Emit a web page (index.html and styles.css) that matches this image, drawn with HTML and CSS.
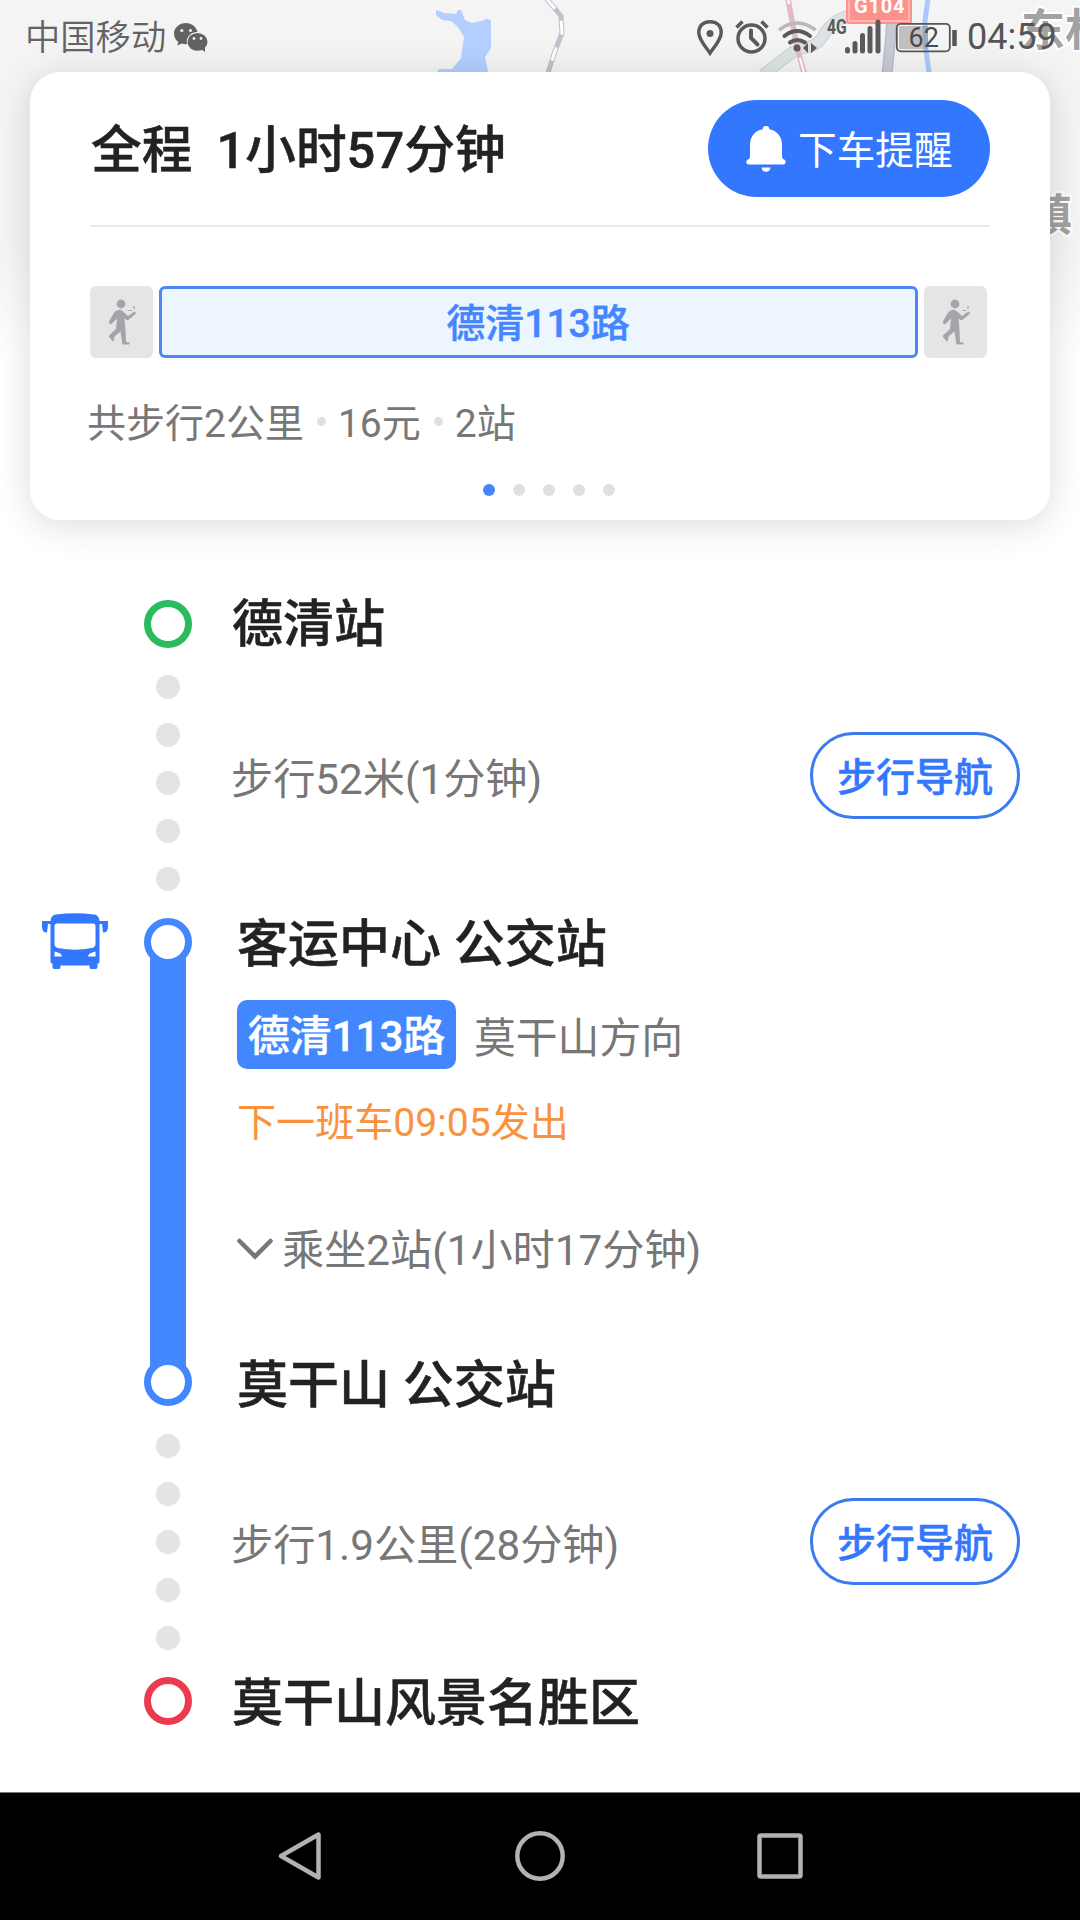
FILE: index.html
```html
<!DOCTYPE html>
<html lang="zh-CN">
<head>
<meta charset="utf-8">
<title>公交路线详情</title>
<link rel="stylesheet" href="styles.css">
</head>
<body>
<svg class="symbols" width="0" height="0" aria-hidden="true">
  <symbol id="walker" viewBox="0 0 28 46">
    <circle cx="13" cy="5" r="4.4"/>
    <path d="M9 11.5 Q12 10 14.500 12 L20 17 L26.500 12.500 Q28.500 13 27.500 15 L21 20.500 Q19.500 21.500 18 20.500 L16.500 19.500 L17.500 31 L18 43 L21 43.500 Q22.500 44.500 21 45.500 L15 45.500 Q14 45 14 43 L12.500 32.500 L6.500 37.500 L6 41.500 Q5 43 4 41.500 L1 38 Q.5 37 1.500 36 L8 30 L9 19.500 L4 24.500 Q2.500 26 1.200 24.500 Q.5 23.500 1.500 21.500 L5.500 14.500 Q7 12 9 11.500Z"/>
    <path d="M20.500 11.500 H24 M26 7 V10" fill="none" stroke="currentColor" stroke-width="1.200"/>
  </symbol>
</svg>
<div class="screen">
  <svg class="map" viewBox="0 0 1080 360" aria-hidden="true">
    <defs>
      <pattern id="hatch" width="4" height="4" patternUnits="userSpaceOnUse">
        <rect width="4" height="4" fill="#f6f6f6"/>
        <path d="M0 4 L4 0 M0 0 L4 4" stroke="#f2f2f2" stroke-width="1"/>
      </pattern>
      <linearGradient id="fade" x1="0" y1="0" x2="0" y2="1">
        <stop offset="0" stop-color="#fff" stop-opacity="0"/>
        <stop offset="1" stop-color="#fff"/>
      </linearGradient>
    </defs>
    <rect width="1080" height="360" fill="url(#hatch)"/>
    <path fill="#b3ceff" d="M436 10 L444 13 L456 14 L458 10 H461 L465 20 L472 23 L482 21 L486 19 L491 20 V48 L485 57 L488 72 H437 L439 69 H452 L461 58 L464 37 L458 27 L451 21 L442 20 L436 15Z"/>
    <g fill="none">
      <path d="M546 -2 L561 16 L562 33 L555 51 L548 73" stroke="#bcc2cc" stroke-width="5"/>
      <path d="M546 -2 L561 16 L562 33 L555 51 L548 73" stroke="#fff" stroke-width="3" stroke-dasharray="14 14"/>
      <path d="M763 75 L790 54 Q797 49 807 47 Q817 46 823 36 Q833 18 856 14" stroke="#c9d0d2" stroke-width="12"/>
      <path d="M763 75 L790 54 Q797 49 807 47 Q817 46 823 36 Q833 18 856 14" stroke="#dde3e5" stroke-width="10"/>
      <path d="M788 -1 L797 47 L804 73" stroke="#e3bcc3" stroke-width="5.500"/>
      <path d="M788 -1 L797 47 L804 73" stroke="#fff" stroke-width="2.500" stroke-dasharray="5 55 20"/>
      <path d="M892 14 Q891 38 887 74" stroke="#b9bdc8" stroke-width="11"/>
      <path d="M892 14 Q891 38 887 74" stroke="#c7cad3" stroke-width="8"/>
      <path d="M928 -1 L925 20 L926 50 L929 73" stroke="#aac8fd" stroke-width="5"/>
    </g>
    <rect x="846" y="-20" width="66" height="44" rx="3" fill="#fd918c"/>
    <rect x="849" y="-17" width="60" height="38" fill="none" stroke="#fec5c1" stroke-width="1.500"/>
    <text class="road-no" x="854" y="13">G104</text>
    <text class="place" x="1021" y="46">东林</text>
    <text class="place" x="1028" y="231">镇</text>
    <rect y="240" width="1080" height="120" fill="url(#fade)"/>
  </svg>

  <header class="status">
    <span class="carrier">中国移动</span>
    <svg class="wechat" viewBox="0 0 34 30" width="34" height="30">
      <path fill="#626262" d="M12 0C5.300 0 0 4.800 0 10.800c0 3.300 1.600 6.200 4.200 8.200L3.300 22.500 7.800 20.500q2 .7 4.200.7l1.200-.1A9.200 9.200 0 0 1 12.800 18.500C12.800 13 17.800 8.800 23.500 9 22.300 3.800 17.600 0 12 0Z"/>
      <ellipse cx="23.500" cy="18.900" rx="10" ry="8.900" fill="#626262"/>
      <path fill="#626262" d="M27 26 L31 29 L31 23Z"/>
      <g fill="#f1f1f1"><circle cx="7.800" cy="7.500" r="1.600"/><circle cx="16.500" cy="7.500" r="1.600"/><circle cx="20" cy="15.500" r="1.400"/><circle cx="27" cy="15.500" r="1.400"/></g>
    </svg>
    <svg class="status-icons" viewBox="0 0 264 40" width="264" height="40">
      <g fill="none" stroke="#5a5a5a" stroke-width="3.500">
        <path d="M13 35 C9 29 1.800 22 1.800 14.500 C1.800 7 7 3.800 13 3.800 S24.200 7 24.200 14.500 C24.200 22 17 29 13 35Z"/>
        <circle cx="54.500" cy="20.500" r="13.500"/>
        <path d="M54 12.500 V20 L60.500 26.500" stroke-width="4" stroke-linecap="round"/>
        <path d="M39.500 9.500 L45.500 3.500 M64.500 3.500 L70.500 9.500"/>
        <path d="M82 12 Q100 -2 118.500 12" stroke="#b9b9b9"/>
        <path d="M87.500 18 Q100 8 113 18 M93 24.500 Q100 19.500 108 24.500" stroke-linecap="round" stroke-width="4"/>
      </g>
      <circle cx="13" cy="15.500" r="3.500" fill="#5a5a5a"/>
      <circle cx="100" cy="30" r="3.500" fill="#5a5a5a"/>
      <path d="M111 25 V35 L106 30Z M114 25 V35 L120 30Z" fill="#5a5a5a"/>
      <text class="net" x="130" y="16">4G</text>
      <g stroke="#5a5a5a" stroke-width="5" stroke-linecap="round">
        <path d="M150.500 31.500 V33 M158 25.500 V33 M165.500 17.500 V33 M173 10.500 V33 M181 4 V33"/>
      </g>
      <rect x="199.800" y="5.800" width="53" height="27.500" rx="4" fill="none" stroke="#555" stroke-width="1.800"/>
      <rect x="202" y="8" width="29" height="23" rx="1" fill="#808080" fill-opacity=".45"/>
      <path d="M257.500 12 V28" stroke="#555" stroke-width="4.500"/>
      <text class="charge" x="211.500" y="28.500">62</text>
    </svg>
    <span class="clock">04:59</span>
  </header>

  <section class="card">
    <div class="summary">
      <h1 class="total"><span>全程</span><span>1小时57分钟</span></h1>
      <button class="remind">
        <svg viewBox="0 0 40 46" width="40" height="46" fill="#fff">
          <path d="M20 0 a3.300 3.300 0 0 1 3.300 3.300 C32 5 36 11.500 36 19 V31 Q36 33 39 34 Q41 38.500 37 38.500 H3 Q-1 38.500 1 34 Q4 33 4 31 V19 C4 11.500 8 5 16.700 3.300 A3.300 3.300 0 0 1 20 0Z"/>
          <path d="M15.500 41.500 H24.500 Q24 45.700 20 45.700 T15.500 41.500Z"/>
        </svg>
        <span>下车提醒</span>
      </button>
    </div>
    <div class="segments">
      <div class="walk-box"><svg width="28" height="46"><use href="#walker"/></svg></div>
      <div class="bus-box">德清113路</div>
      <div class="walk-box"><svg width="28" height="46"><use href="#walker"/></svg></div>
    </div>
    <div class="facts"><span>共步行2公里</span><i></i><span>16元</span><i></i><span>2站</span></div>
    <div class="pager"><i class="on"></i><i></i><i></i><i></i><i></i></div>
  </section>

  <main class="route">
    <div class="row stop">
      <div class="rail"><span class="ring start"></span></div>
      <h2 class="name">德清站</h2>
    </div>
    <div class="row walk first">
      <div class="rail dots"><i></i><i></i><i></i><i></i><i></i></div>
      <div class="walk-info"><span class="walk-text">步行52米(1分钟)</span><button class="nav-btn">步行导航</button></div>
    </div>
    <div class="row ride">
      <div class="mode">
        <svg viewBox="0 0 66 56" width="66" height="56">
          <path fill="#3377ff" fill-rule="evenodd" d="M14 1.500 Q33 -1.200 52 1.500 Q57 2 57.500 8 H66 V14 Q66 19.500 61 19.500 L60 11 H57.500 V49 Q57.500 50.500 55.500 50.500 V54 Q55.500 56 53.500 56 H49 Q47.500 56 47.500 52.500 H18.500 Q18.500 56 17 56 H12.500 Q10.500 56 10.500 54 V50.500 Q8.500 50.500 8.500 49 V11 H6 L5 19.500 Q0 19.500 0 14 V8 H8.500 Q9 2 14 1.500Z M15 10.500 Q12.500 10.500 12.500 13 V31 Q12.500 34 16 35 Q33 38.500 50 35 Q53.500 34 53.500 31 V13 Q53.500 10.500 51 10.500Z M12.500 38.500 V43.500 H20 Q20 40 12.500 38.500Z M53.500 38.500 Q46 40 46 43.500 H53.500Z"/>
        </svg>
      </div>
      <div class="rail line"><span class="ring bus"></span><span class="ring bus"></span></div>
      <div class="ride-info">
        <h2 class="name">客运中心 公交站</h2>
        <div class="line-info"><span class="badge">德清113路</span><span>莫干山方向</span></div>
        <div class="next">下一班车09:05发出</div>
        <div class="stops">
          <svg width="36" height="22" viewBox="0 0 36 22" fill="none" stroke="#777" stroke-width="4.500" stroke-linecap="round"><path d="M2.500 3 L18 18.500 L33.500 3"/></svg>
          <span>乘坐2站(1小时17分钟)</span>
        </div>
        <h2 class="name">莫干山 公交站</h2>
      </div>
    </div>
    <div class="row walk">
      <div class="rail dots"><i></i><i></i><i></i><i></i><i></i></div>
      <div class="walk-info"><span class="walk-text">步行1.9公里(28分钟)</span><button class="nav-btn">步行导航</button></div>
    </div>
    <div class="row stop">
      <div class="rail"><span class="ring end"></span></div>
      <h2 class="name">莫干山风景名胜区</h2>
    </div>
  </main>

  <footer class="softkeys">
    <svg width="50" height="52" viewBox="0 0 50 52"><path d="M43.500 4.500 V47.500 L6 26Z"/></svg>
    <svg width="50" height="52" viewBox="0 0 50 52"><circle cx="25" cy="26" r="22.700"/></svg>
    <svg width="50" height="52" viewBox="0 0 50 52"><rect x="4.500" y="5.500" width="41" height="41" rx="1.500"/></svg>
  </footer>
</div>
</body>
</html>
```
FILE: styles.css
```css
* { box-sizing: border-box; margin: 0; padding: 0; }

body {
  width: 1080px;
  height: 1920px;
  background: #fff;
  color: #222;
  font-family: Roboto, "Noto Sans CJK SC", sans-serif;
  overflow: hidden;
}

button { font: inherit; background: none; border: 0; }
i { display: block; border-radius: 50%; }
.symbols { position: absolute; }

.screen {
  position: relative;
  display: flex;
  flex-direction: column;
  height: 1920px;
}

/* Map behind the status bar and the card */
.map { position: absolute; left: 0; top: 0; width: 1080px; height: 360px; }
.road-no { font-size: 20px; font-weight: 700; fill: #fff; letter-spacing: .8px; }
.place {
  font-size: 44px;
  font-weight: 700;
  fill: #a2a2a2;
  stroke: #fff;
  stroke-width: 4px;
  paint-order: stroke;
}

/* Status bar */
.status {
  position: relative;
  z-index: 2;
  display: flex;
  align-items: center;
  height: 72px;
  padding: 3px 0 0 25px;
  color: #5a5a5a;
}
.carrier { width: 149px; padding-top: 2px; font-size: 35.300px; font-weight: 350; line-height: 69px; color: #636363; }
.wechat { margin: 0 489px 0 0; }
.status-icons { margin-right: 6px; }
.net { font-size: 21px; font-weight: 700; fill: #5a5a5a; font-family: Roboto, sans-serif; transform: scaleX(.75); transform-origin: 130px 0; }
.charge { font-size: 27px; fill: #4c4c4c; }
.clock { font-size: 36px; line-height: 69px; color: #555; }

/* Summary card */
.card {
  position: relative;
  height: 448px;
  margin: 0 30px;
  padding: 0 60px;
  border-radius: 30px;
  background: #fff;
  box-shadow: 0 5px 36px rgba(0, 0, 0, .14);
}
.summary {
  display: flex;
  justify-content: space-between;
  height: 155px;
  padding-top: 28px;
  border-bottom: 2px solid #e9e9e9;
}
.total { display: flex; gap: 24px; padding-left: 1px; font-size: 50.700px; font-weight: 500; line-height: 102px; -webkit-text-stroke: .5px; }
.remind {
  display: flex;
  align-items: center;
  gap: 12px;
  width: 282px;
  height: 97px;
  padding-left: 38px;
  border-radius: 49px;
  background: #3377ff;
  color: #fff;
  font-size: 38.700px;
}
.remind span { padding-bottom: 3px; }
.segments { display: flex; gap: 6px; margin: 59px 3px 0 0; }
.walk-box {
  display: flex;
  align-items: center;
  justify-content: center;
  width: 63px;
  height: 72px;
  border-radius: 6px;
  background: #e5e5e5;
  color: #a3a5aa;
  fill: currentColor;
}
.bus-box {
  flex: 1;
  height: 72px;
  padding-right: 1px;
  border: 3px solid #4c87f3;
  border-radius: 6px;
  background: #edf5ff;
  color: #4486ff;
  font-size: 39px;
  font-weight: 500;
  line-height: 70px;
  text-align: center;
  -webkit-text-stroke: .4px;
}
.facts {
  display: flex;
  align-items: center;
  height: 54px;
  margin: 35px 0 0 -3px;
  color: #777;
  font-size: 39px;
}
.facts i { width: 9px; height: 9px; margin: 3px 12px 0 13px; background: #e0e0e0; }
.pager { display: flex; justify-content: center; gap: 18px; margin-top: 37px; padding-left: 18px; }
.pager i { width: 12px; height: 12px; background: #e0e0e0; }
.pager .on { background: #4486ff; }

/* Route timeline */
.route { flex: 1; padding-top: 80px; }
.row { display: grid; grid-template-columns: 144px 48px 1fr; }
.rail { grid-column: 2; display: flex; flex-direction: column; align-items: center; }
.ring { width: 48px; height: 48px; border: 7.500px solid; border-radius: 50%; background: #fff; }
.start { border-color: #2abb5d; }
.bus { border-color: #4387ff; }
.end { border-color: #ec3b4e; }
.name { font-size: 51px; font-weight: 500; line-height: 54px; white-space: nowrap; -webkit-text-stroke: .5px; }
.stop { height: 48px; }
.stop .name { padding-left: 40px; }
.stop:first-child .name { line-height: 50px; }

.walk { height: 271px; }
.first { height: 270px; }
.dots { justify-content: center; gap: 24px; }
.dots i { width: 24px; height: 24px; background: #e4e4e4; }
.walk-info {
  display: flex;
  align-items: center;
  justify-content: space-between;
  padding: 0 60px 0 39px;
}
.first .walk-info { padding-bottom: 15px; }
.walk-text { color: #777; font-size: 42.200px; }
.nav-btn {
  width: 210px;
  height: 87px;
  padding-bottom: 4px;
  border: 3px solid #3c7af2;
  border-radius: 44px;
  color: #3377ff;
  font-size: 39px;
  font-weight: 500;
  -webkit-text-stroke: .4px;
}

.ride { height: 488px; }
.mode { padding: 0 0 0 42px; margin-top: -5px; }
.line {
  height: 488px;
  justify-content: space-between;
  background: linear-gradient(#4387ff, #4387ff) center / 36px 440px no-repeat;
}
.ride-info { display: flex; flex-direction: column; height: 488px; padding-left: 45px; }
.line-info {
  display: flex;
  align-items: center;
  gap: 18px;
  height: 69px;
  margin-top: 28px;
  color: #777;
  font-size: 41.800px;
}
.badge {
  width: 219px;
  height: 69px;
  border-radius: 10px;
  background: #4387ff;
  color: #fff;
  font-size: 42px;
  font-weight: 500;
  line-height: 73px;
  text-align: center;
  -webkit-text-stroke: .4px;
}
.next { margin-top: 24px; color: #f9913f; font-size: 39.100px; line-height: 60px; }
.stops {
  display: flex;
  align-items: center;
  gap: 9px;
  height: 60px;
  margin: 66px 0 80px;
  color: #777;
  font-size: 42.200px;
}
.stops span { padding-bottom: 5px; }

/* Android soft keys */
.softkeys {
  display: flex;
  justify-content: center;
  gap: 190px;
  height: 128px;
  padding-top: 37px;
  border-top: 1px solid #777;
  background: #000;
}
.softkeys svg { fill: none; stroke: #b2b2b2; stroke-width: 4.500; stroke-linejoin: round; }
```
